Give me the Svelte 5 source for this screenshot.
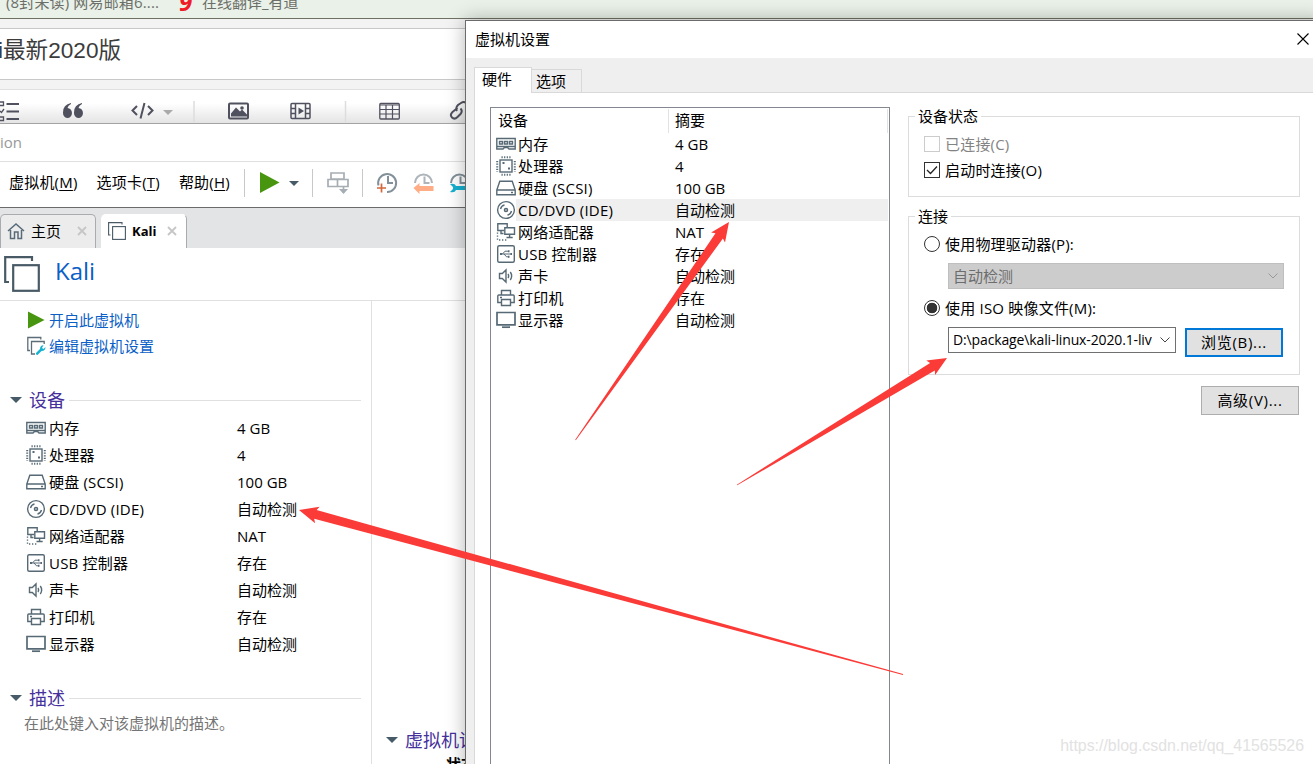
<script lang="ts">
	const devices = [
		{ icon: 'memory', name: '内存', value: '4 GB' },
		{ icon: 'cpu', name: '处理器', value: '4' },
		{ icon: 'disk', name: '硬盘 (SCSI)', value: '100 GB' },
		{ icon: 'cd', name: 'CD/DVD (IDE)', value: '自动检测' },
		{ icon: 'net', name: '网络适配器', value: 'NAT' },
		{ icon: 'usb', name: 'USB 控制器', value: '存在' },
		{ icon: 'sound', name: '声卡', value: '自动检测' },
		{ icon: 'printer', name: '打印机', value: '存在' },
		{ icon: 'display', name: '显示器', value: '自动检测' }
	];

	const menus = [
		{ label: '虚拟机', key: 'M' },
		{ label: '选项卡', key: 'T' },
		{ label: '帮助', key: 'H' }
	];

	const arrows = [
		{ tip: [729, 222], tail: [575.5, 440] },
		{ tip: [947, 358], tail: [737, 485] },
		{ tip: [299, 510], tail: [903, 674.5] }
	];

	let selected = $state(3);
	let source = $state('iso');
	let connectAtStart = $state(true);

	function arrowPoints(tip: number[], tail: number[]): string {
		const dx = tip[0] - tail[0];
		const dy = tip[1] - tail[1];
		const len = Math.hypot(dx, dy);
		const ux = dx / len;
		const uy = dy / len;
		const at = (back: number, side: number) =>
			`${(tip[0] - ux * back - uy * side).toFixed(1)},${(tip[1] - uy * back + ux * side).toFixed(1)}`;
		return [at(0, 0), at(19, 8.5), at(17, 4.5), at(len, 0.4), at(len, -0.4), at(17, -4.5), at(19, -8.5)].join(' ');
	}
</script>

{#snippet deviceIcon(name: string)}
	<svg class="dev-icon" width="20" height="20" viewBox="0 0 20 20">
		{#if name === 'memory'}
			<path d="M.8 4.500h18.400v10.500H13l-1.500-1.500H8.500L7 15H.8z M1 12.500h18" />
			<path d="M3.500 7.500h3v2.500h-3z M8.500 7.500h3v2.500h-3z M13.500 7.500h3v2.500h-3z" />
		{:else if name === 'cpu'}
			<rect x="4" y="4" width="12" height="12" />
			<path d="M5.500 1.200h10M5.500 18.800h10" stroke-width="2" stroke-dasharray="1.200 1.400" />
			<path d="M1.200 5v11M18.800 5v11" stroke-width="2" stroke-dasharray="1.200 1.400" />
			<path d="M6.500 7h2M12 12.500h2" stroke-width="2" />
		{:else if name === 'disk'}
			<path d="M3.800 3.200h12.400L19.200 12v4.800H.8V12z M.8 12h18.400M15 14.500h2" />
		{:else if name === 'cd'}
			<circle cx="10" cy="10" r="8.400" />
			<circle cx="10" cy="10" r="1.500" stroke-width="1.600" />
			<path d="M4.500 9Q5.500 5.500 8.500 5M15.500 11Q14.500 14.500 11.500 15" />
		{:else if name === 'net'}
			<path d="M8 8.500H1.800V1.800h9.400V5M5 9v2.500h2.500" />
			<path d="M8.800 5.800h9.700v6.500H8.800zM13.600 12.500v3M10.500 15.500h6.200" />
			<path d="M1.500 10.500v7.500h10" stroke-dasharray="1.300 1.700" />
		{:else if name === 'usb'}
			<rect x="1.700" y="1.700" width="16.600" height="16.600" rx="1.500" />
			<path d="M4 10h11M6.500 10L9 7.200h3M8 10l2.500 2.800H13" stroke-width="1" />
			<path d="M4 10h2M12 7.200h1.500M12 12.800h1.500M14.500 10h1.500" stroke-width="2" />
		{:else if name === 'sound'}
			<path d="M3.500 7.500h2.800L10 4v12l-3.700-3.500H3.500z M12 8q1.300 2 0 4M14.300 6q2.700 4 0 8" />
		{:else if name === 'printer'}
			<path d="M5.500 7V2.500h9V7M5 14.500H1.800V8q0-1 1-1h14.400q1 0 1 1v6.500H15M5.500 11.500h9v6h-9z" />
			<path d="M4 9.500h2" />
		{:else}
			<path d="M1 2.500h18v12.300H1z" stroke-width="1.700" />
			<path d="M6 17.200h8" stroke-width="1.700" />
		{/if}
	</svg>
{/snippet}

{#snippet vmIcon(size: number)}
	<svg width={size} height={size} viewBox="0 0 36 36" class="vm-icon">
		<path d="M5 26H1.200V1.200H28V5" />
		<rect x="9.200" y="9.200" width="25.600" height="25.600" />
	</svg>
{/snippet}

<div class="desktop">
	<div class="browser">
		<div class="bookmarks">
			<span class="mail">(8封未读) 网易邮箱6....</span>
			<b class="yd">9</b>
			<span>在线翻译_有道</span>
		</div>
		<div class="strip"></div>
		<div class="post-title">i最新2020版</div>
		<div class="strip small"></div>
		<div class="editor-bar">
			<svg width="466" height="33" viewBox="0 0 466 33">
				<g fill="none" stroke="#50515f" stroke-width="2">
					<path d="M6.500 14H19M6.500 21.500H19M6.500 29H19" />
					<path d="M0 12h3.500v3.500H0M0 21l1.500 1.500L4 19M0 27h3.500v3.500H0" stroke-width="1.300" />
					<path d="M137 16l-4.500 4.500 4.500 4.500M148 16l4.500 4.500-4.500 4.500M144.500 13l-4 15.500" />
					<rect x="229" y="13.500" width="19" height="15" rx="1" />
					<rect x="291" y="13.500" width="19" height="15" rx="1" stroke-width="1.500" />
					<path d="M295.500 13v15M305.500 13v15M291 18.500h4M291 23.500h4M306 18.500h4M306 23.500h4" stroke-width="1.500" />
					<rect x="379.800" y="13.500" width="19.500" height="15.500" rx="1" stroke-width="1.300" />
					<path d="M380 15h19M380 19.500h19M380 24h19M386 15v14M392.500 15v14" stroke-width="1.200" />
					<path d="M457.500 18l-5 4q-3 3-.5 5.500t5.500-.5l3-3q2.500-3 0-5.500M457 21q-2-3 1-6l3-2q3-2 5 0" />
				</g>
				<g fill="#50515f">
					<path d="M71 13q-8 1.500-8 9.500a4.500 5 0 1 0 4.500-4.500q.5-2.500 3.500-4zM82 13q-8 1.500-8 9.500a4.500 5 0 1 0 4.500-4.500q.5-2.500 3.500-4z" />
					<path d="M231 26.500v-3l5-6 4 4 2-2 5 5v2zM298.500 17.500l5.500 3.500-5.500 3.500z" />
					<circle cx="242" cy="18" r="1.800" />
				</g>
				<path d="M163 20h10l-5 5z" fill="#aaa" />
				<path d="M194 11v21M345.500 11v21" stroke="#ddd" stroke-width="1.500" />
			</svg>
		</div>
	</div>

	<div class="workstation">
		<div class="ws-title">ion</div>
		<div class="ws-menu">
			{#each menus as menu}
				<span class="menu">{menu.label}(<u>{menu.key}</u>)</span>
			{/each}
			<svg width="236" height="44" viewBox="0 0 236 44">
				<path d="M14.500 8v28M82.500 8v28M132.500 8v28" stroke="#c8c8c8" />
				<path d="M30 11v21l19.500-10.500z" fill="#48960f" />
				<path d="M59 20h10l-5 5z" fill="#465a68" />
				<g fill="none" stroke="#a6adb3" stroke-width="1.700">
					<path d="M101 12h13v6h-13zM98 18.500h9.500v7H98zM107.500 18.500h10.500v7h-10.500zM113.500 25v7" />
					<path d="M109 28l4.500 5 4.500-5z" fill="#a6adb3" stroke="none" />
				</g>
				<g fill="none" stroke="#82909a" stroke-width="2">
					<path d="M148.500 24.500a9 9 0 1 1 8.500 6.500M158 15v7h5" />
					<path d="M185 22a8.500 8.500 0 1 1 17 0M194.500 15.500v6.500h5" stroke="#adb5bb" />
					<path d="M221 22a8.500 8.500 0 1 1 17 0M230.500 15.500v6.500h5" />
				</g>
				<path d="M147 27h9M151.500 22.500v9" stroke="#d3683d" stroke-width="1.700" />
				<path d="M183.500 27l6-5v3h14v5h-14v3z" fill="#ffad86" />
				<path d="M220 23q5-1 6 2h14v4h-14q-1 3-6 2l3-3v-2z" fill="#14b1d0" />
			</svg>
		</div>
		<div class="ws-tabs">
			<div class="ws-tab home">
				<svg width="18" height="18" viewBox="0 0 18 18"><path d="M1 9l8-7 8 7M3.500 8v8.500h4V10h3.500v6.500h3.500V8" fill="none" stroke="#596b78" stroke-width="1.500" /></svg>
				<span>主页</span>
				<svg width="10" height="10" viewBox="0 0 10 10" class="tab-x"><path d="M1 1l8 8M9 1l-8 8" /></svg>
			</div>
			<div class="ws-tab active">
				{@render vmIcon(18)}
				<b>Kali</b>
				<svg width="10" height="10" viewBox="0 0 10 10" class="tab-x"><path d="M1 1l8 8M9 1l-8 8" /></svg>
			</div>
		</div>
		<div class="vm-head">
			{@render vmIcon(36)}
			<h1>Kali</h1>
		</div>
		<div class="vm-body">
			<div class="vm-left">
				<div class="action">
					<svg width="20" height="20" viewBox="0 0 20 20"><path d="M2 1.500v17L18.500 10z" fill="#48960f" /></svg>
					开启此虚拟机
				</div>
				<div class="action">
					<svg width="20" height="20" viewBox="0 0 20 20">
						<path d="M4 14.500H1.800V1.500h13v2M9 18H5.500V5.500h12.700V8" fill="none" stroke="#5b6d79" stroke-width="1.300" />
						<path d="M10 17l4-4q0-3.500 3.500-4l-1.500 3 1.500 1 2-2q0 4-4 4l-4 4q-2 0-1.500-2z" fill="#14b1d0" />
					</svg>
					编辑虚拟机设置
				</div>
				<div class="section first"><i class="caret"></i><h2>设备</h2><hr /></div>
				<div class="devices">
					{#each devices as device}
						<div class="device">
							{@render deviceIcon(device.icon)}
							<span class="name">{device.name}</span>
							<span>{device.value}</span>
						</div>
					{/each}
				</div>
				<div class="section"><i class="caret"></i><h2>描述</h2><hr /></div>
				<p class="hint">在此处键入对该虚拟机的描述。</p>
			</div>
			<div class="vm-right">
				<div class="section"><i class="caret"></i><h2>虚拟机详细信息</h2></div>
				<b class="state">状态：</b>
			</div>
		</div>
	</div>

	<div class="dialog">
		<div class="dlg-title">
			<span>虚拟机设置</span>
			<svg width="12" height="12" viewBox="0 0 12 12"><path d="M.5.5l11 11M11.500.5l-11 11" stroke="#000" stroke-width="1.100" /></svg>
		</div>
		<div class="dlg-tabs">
			<div class="dlg-tab on">硬件</div>
			<div class="dlg-tab">选项</div>
		</div>
		<div class="dlg-page">
			<div class="list">
				<div class="list-head"><span class="col">设备</span><span class="col">摘要</span></div>
				{#each devices as device, i}
					<!-- svelte-ignore a11y_click_events_have_key_events, a11y_no_static_element_interactions -->
					<div class="list-row" onclick={() => (selected = i)}>
						{@render deviceIcon(device.icon)}
						<div class="cells" class:selected={selected === i}>
							<span class="name">{device.name}</span>
							<span>{device.value}</span>
						</div>
					</div>
				{/each}
			</div>
			<div class="options">
				<fieldset class="status">
					<legend>设备状态</legend>
					<div class="option off"><span class="box"></span>已连接(C)</div>
					<label class="option">
						<input type="checkbox" bind:checked={connectAtStart} />
						<span class="box">
							{#if connectAtStart}
								<svg width="14" height="14" viewBox="0 0 14 14"><path d="M2 7l3.500 3.500L12 3.500" fill="none" stroke="#222" stroke-width="1.300" /></svg>
							{/if}
						</span>启动时连接(O)
					</label>
				</fieldset>
				<fieldset class="connection">
					<legend>连接</legend>
					<label class="option physical">
						<input type="radio" value="physical" bind:group={source} />
						<span class="radio" class:checked={source === 'physical'}></span>使用物理驱动器(P):
					</label>
					<div class="combo disabled"><span>自动检测</span>
						<svg width="10" height="6" viewBox="0 0 10 6"><path d="M.5.500L5 5 9.500.5" /></svg>
					</div>
					<label class="option iso">
						<input type="radio" value="iso" bind:group={source} />
						<span class="radio" class:checked={source === 'iso'}></span>使用 ISO 映像文件(M):
					</label>
					<div class="file">
						<div class="combo"><span class="path">D:\package\kali-linux-2020.1-liv</span>
							<svg width="10" height="6" viewBox="0 0 10 6"><path d="M.5.500L5 5 9.500.5" /></svg>
						</div>
						<button class="primary">浏览(B)...</button>
					</div>
				</fieldset>
				<button class="advanced">高级(V)...</button>
			</div>
		</div>
	</div>

	<svg class="arrows" width="1313" height="764" viewBox="0 0 1313 764">
		{#each arrows as arrow}
			<polygon points={arrowPoints(arrow.tip, arrow.tail)} fill="#fb3b38" />
		{/each}
	</svg>
	<div class="watermark">https://blog.csdn.net/qq_41565526</div>
</div>

<style>
	:global(body) {
		margin: 0;
		overflow: hidden;
	}

	.desktop {
		position: relative;
		width: 1313px;
		height: 764px;
		overflow: hidden;
		background: #fff;
		color: #000;
		font-family: 'Open Sans', 'Noto Sans CJK SC', sans-serif;
		font-size: 15px;
		line-height: 20px;
		white-space: nowrap;
	}

	.desktop * {
		box-sizing: border-box;
	}

	svg {
		display: block;
		flex-shrink: 0;
	}

	.bookmarks {
		display: flex;
		align-items: flex-end;
		height: 19px;
		padding: 0 0 6px 6px;
		overflow: hidden;
		background: #e9f1e8;
		border-bottom: 1px solid #707166;
		color: #6c6f69;
	}

	.mail {
		width: 173px;
		letter-spacing: 0.15px;
	}

	.yd {
		width: 23px;
		color: #ef1c27;
		font-size: 24px;
		font-style: italic;
	}

	.strip {
		height: 10px;
		background: #f3f3f3;
		border-bottom: 1px solid #c8c8c8;
	}

	.post-title {
		height: 51px;
		padding-top: 7px;
		margin-left: -2px;
		border-bottom: 1px solid #c8c8c8;
		font-family: 'Liberation Sans', 'Noto Sans CJK SC', sans-serif;
		font-size: 22.6px;
		line-height: 30px;
		color: #3c3c3c;
	}

	.strip.small {
		border-color: #e0e0e0;
	}

	.editor-bar {
		height: 33px;
		background: linear-gradient(#fff 40%, #e4e4e4);
	}

	.workstation {
		position: absolute;
		left: 0;
		top: 123px;
		width: 480px;
		height: 641px;
		overflow: hidden;
		background: #fff;
		border-top: 1px solid #a3a3a3;
	}

	.ws-title {
		height: 38px;
		padding-top: 8px;
		border-bottom: 1px solid #e0e0e0;
		color: #999;
	}

	.ws-menu {
		display: flex;
		align-items: center;
		gap: 19px;
		height: 46px;
		padding: 0 0 4px 9px;
		border-bottom: 1px solid #6b6b6b;
	}

	.menu {
		margin-top: -1px;
		letter-spacing: 0.2px;
	}

	.ws-menu svg {
		margin: 1px 0 0 -19px;
	}

	.ws-menu u {
		text-underline-offset: 2px;
	}

	.ws-tabs {
		display: flex;
		align-items: flex-end;
		gap: 5px;
		height: 40px;
		background: #e3e4e6;
	}

	.ws-tab {
		display: flex;
		align-items: center;
		height: 34px;
		padding-bottom: 2px;
		border: 1px solid #a9abae;
		border-bottom: none;
		border-radius: 5px 5px 0 0;
	}

	.home {
		width: 96px;
		padding-left: 6px;
		background: #ececed;
	}

	.home span {
		width: 46px;
		margin-left: 6px;
	}

	.active {
		width: 86px;
		padding-left: 6px;
		background: #fff;
		border-color: #fff #a9abae #fff #fff;
	}

	.active b {
		width: 35px;
		margin-left: 6px;
		font-size: 13px;
	}

	.tab-x {
		fill: none;
		stroke: #c6c6c6;
		stroke-width: 1.8;
	}

	.vm-icon {
		fill: none;
		stroke: #485a66;
		stroke-width: 2.2;
	}

	.vm-head {
		display: flex;
		align-items: center;
		height: 53px;
		padding-left: 4px;
		border-bottom: 1px solid #e0e0e0;
	}

	.vm-head h1 {
		margin: -6px 0 0 15px;
		font-size: 24px;
		font-weight: 400;
		color: #0b5fc7;
	}

	.vm-body {
		display: flex;
		height: 463px;
	}

	.vm-left {
		flex-shrink: 0;
		width: 372px;
		padding-top: 6px;
		border-right: 1px solid #e0e0e0;
	}

	.action {
		display: flex;
		align-items: center;
		gap: 3px;
		height: 26px;
		padding-left: 26px;
		color: #0b5fc7;
	}

	.section {
		display: flex;
		align-items: center;
		height: 28px;
		padding: 0 10px;
	}

	.section.first {
		margin-top: 27px;
	}

	.section h2 {
		margin: 0 4px 0 7px;
		font-size: 18px;
		font-weight: 400;
		color: #45309c;
	}

	.section hr {
		flex: 1;
		margin: 0;
		border: none;
		border-top: 1px solid #e0e0e0;
	}

	.caret {
		border: 6px solid transparent;
		border-top-color: #465a68;
		border-bottom: none;
	}

	.devices {
		margin-bottom: 27px;
	}

	.device {
		display: flex;
		align-items: center;
		gap: 3px;
		height: 27px;
		padding-left: 26px;
	}

	.name {
		letter-spacing: 0.2px;
	}

	.device .name {
		width: 185px;
	}

	.dev-icon {
		fill: none;
		stroke: #566975;
		stroke-width: 1.4;
	}

	.hint {
		margin: 1px 0 0 24px;
		color: #757575;
	}

	.vm-right {
		padding: 425px 0 0 4px;
	}

	.state {
		display: block;
		margin-left: 70px;
	}

	.dialog {
		position: absolute;
		left: 465px;
		top: 20px;
		width: 860px;
		height: 760px;
		background: #efefef;
		border: 1px solid #6b6b6b;
		box-shadow: 0 0 18px rgba(0, 0, 0, 0.3);
	}

	.dlg-title {
		display: flex;
		align-items: center;
		justify-content: space-between;
		height: 37px;
		padding: 0 15px 2px 9px;
		background: #fff;
	}

	.dlg-tabs {
		display: flex;
		align-items: flex-end;
		height: 34px;
		padding-left: 8px;
	}

	.dlg-tab {
		width: 50px;
		height: 23px;
		padding: 1px 4px;
		border: 1px solid #d9d9d9;
		border-width: 1px 1px 0 0;
	}

	.dlg-tab.on {
		position: relative;
		z-index: 1;
		width: 58px;
		height: 26px;
		padding: 1px 7px;
		margin-bottom: -1px;
		background: #fff;
		border-left-width: 1px;
	}

	.dlg-page {
		display: flex;
		gap: 18px;
		height: 680px;
		margin-left: 8px;
		padding: 14px 0 0 15px;
		background: #fff;
		border: 1px solid #d9d9d9;
	}

	.list {
		width: 400px;
		height: 670px;
		border: 1px solid #828790;
	}

	.list-head {
		display: flex;
		height: 25px;
		padding: 1px 1px 0 0;
	}

	.col {
		width: 219px;
		padding: 1px 6px;
		border-right: 1px solid #e2e2e2;
	}

	.col:first-child {
		width: 178px;
		padding-left: 7px;
	}

	.list-row {
		display: flex;
		align-items: center;
		height: 22px;
		padding-left: 5px;
	}

	.cells {
		display: flex;
		align-items: center;
		flex: 1;
		height: 22px;
		margin-right: 1px;
		padding-left: 2px;
	}

	.cells.selected {
		background: #efefef;
	}

	.cells .name {
		width: 157px;
	}

	.options {
		display: flex;
		flex-direction: column;
		width: 392px;
		margin-top: -1px;
	}

	fieldset {
		margin: 0;
		padding: 0 0 0 15px;
		border: 1px solid #dcdcdc;
	}

	legend {
		margin-left: -9px;
		padding: 0 3px;
		height: 20px;
	}

	.status {
		height: 91px;
	}

	.connection {
		height: 169px;
		margin-top: 9px;
	}

	.option {
		display: flex;
		align-items: center;
		gap: 5px;
		height: 26px;
		letter-spacing: 0.2px;
	}

	.status .option.off {
		height: 26px;
		margin-top: 5px;
		color: #838383;
	}

	.option input {
		position: absolute;
		opacity: 0;
		pointer-events: none;
	}

	.box {
		width: 16px;
		height: 16px;
		border: 1px solid #333;
	}

	.off .box {
		border-color: #ccc;
	}

	.radio {
		width: 16px;
		height: 16px;
		border: 1px solid #333;
		border-radius: 50%;
	}

	.radio.checked {
		background: radial-gradient(#333 0 5px, #fff 5.6px);
	}

	.connection .option.physical {
		height: 37px;
		padding-bottom: 2px;
	}

	.connection .option.iso {
		height: 38px;
	}

	.combo {
		display: flex;
		align-items: center;
		justify-content: space-between;
		width: 228px;
		height: 26px;
		margin-left: 24px;
		padding: 0 5px 0 4px;
		border: 1px solid #707070;
	}

	.combo svg {
		fill: none;
		stroke: #444;
	}

	.combo.disabled {
		width: 336px;
		background: #ccc;
		border-color: #bfbfbf;
		color: #6d6d6d;
	}

	.disabled svg {
		stroke: #999;
	}

	.path {
		font-size: 14px;
		letter-spacing: -0.13px;
	}

	.file {
		display: flex;
		gap: 9px;
	}

	button {
		width: 98px;
		height: 29px;
		padding: 0 0 2px;
		background: #e1e1e1;
		border: 1px solid #adadad;
		color: #000;
		font: inherit;
		letter-spacing: 0.7px;
	}

	.primary {
		margin-top: 1px;
		border: 2px solid #0078d7;
	}

	.advanced {
		align-self: flex-end;
		margin: 11px 1px 0 0;
	}

	.arrows {
		position: absolute;
		left: 0;
		top: 0;
		pointer-events: none;
	}

	.watermark {
		position: absolute;
		right: 9px;
		bottom: 8px;
		font-family: 'Liberation Sans', sans-serif;
		font-size: 15.9px;
		color: #e2e2e2;
	}
</style>
